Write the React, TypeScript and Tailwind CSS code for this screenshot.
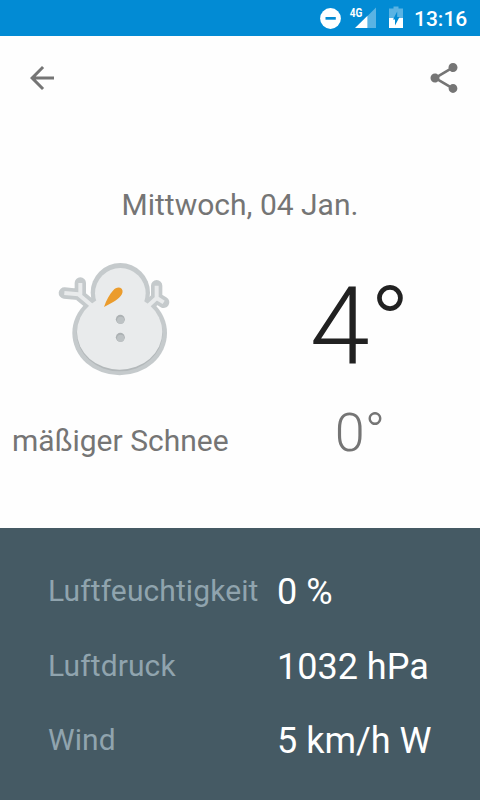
import { FC } from "react";

interface DetailProps {
  label: string;
  value: string;
}

const details: DetailProps[] = [
  { label: "Luftfeuchtigkeit", value: "0 %" },
  { label: "Luftdruck", value: "1032 hPa" },
  { label: "Wind", value: "5 km/h W" },
];

const StatusBar: FC = () => (
  <div className="flex h-9 items-center justify-end bg-[#028bd4] pr-3 text-white">
    <svg className="h-9 w-[21px]" viewBox="320 0 21 36">
      <circle cx="330.5" cy="18.5" r="10.4" fill="#fff" />
      <path d="M325.5 17h10.3v2.7h-10.3z" fill="#028bd4" />
    </svg>
    <svg className="ml-2 h-9 w-7" viewBox="349 0 28 36">
      <path d="M376 7.5V28h-8.500V16z" fill="#fff" fillOpacity=".35" />
      <path d="M367.5 15.8V28H355z" fill="#fff" />
      <text
        x="349.8"
        y="17"
        fill="#fff"
        fontFamily="Roboto, sans-serif"
        fontSize="13.5"
        fontWeight="700"
        textLength="12.6"
        lengthAdjust="spacingAndGlyphs"
      >
        4G
      </text>
    </svg>
    <svg className="ml-3 h-9 w-[14px]" viewBox="389 0 14 36">
      <path d="M389 8.5h4.5v-2h5v2h4.500V18H389z" fill="#fff" fillOpacity=".35" />
      <path d="M389 18h14v10h-14z" fill="#fff" />
      <path d="M397.200 11.500v5.500h2.300l-4.500 8.500v-6h-2z" fill="#028bd4" />
    </svg>
    <span className="ml-[11px] w-[54px] pt-[2px] text-[21px] leading-9 font-medium">
      13:16
    </span>
  </div>
);

const Toolbar: FC = () => (
  <div className="flex h-[84px] items-center justify-between pr-[18px] pl-6 text-[#757575]">
    <button aria-label="Zurück">
      <svg className="size-9" viewBox="0 0 24 24" fill="currentColor">
        <path d="M20 11H7.830l5.590-5.590L12 4l-8 8 8 8 1.410-1.410L7.830 13H20v-2z" />
      </svg>
    </button>
    <button aria-label="Teilen">
      <svg className="size-9" viewBox="0 0 24 24" fill="currentColor">
        <path d="M18 16.080c-.76 0-1.440.3-1.960.77L8.910 12.700c.05-.23.09-.46.09-.7s-.04-.47-.09-.7l7.050-4.110c.54.5 1.250.81 2.040.81 1.660 0 3-1.340 3-3s-1.340-3-3-3-3 1.340-3 3c0 .24.04.47.09.7L8.040 9.810C7.500 9.310 6.790 9 6 9c-1.660 0-3 1.340-3 3s1.340 3 3 3c.79 0 1.500-.31 2.040-.81l7.120 4.160c-.05.21-.08.43-.08.65 0 1.610 1.310 2.920 2.920 2.920s2.920-1.310 2.920-2.920-1.310-2.920-2.920-2.920z" />
      </svg>
    </button>
  </div>
);

const leftArm = "M43 114l42 4 41 34M91 84v35";
const rightArm = "M320 92v37l-26 24M320 129l21 13";

const Snowman: FC = () => (
  <svg className="size-[130px]" viewBox="0 0 390 390" fill="none">
    {/* grey sticker border */}
    <g fill="#c5cacc" stroke="#c5cacc">
      <circle cx="211" cy="113" r="89" stroke="none" />
      <ellipse cx="209" cy="234" rx="142" ry="127" stroke="none" />
      <g fill="none" strokeWidth="34" strokeLinecap="round" strokeLinejoin="round">
        <path d={leftArm} />
        <path d={rightArm} />
      </g>
    </g>
    <ellipse cx="209" cy="234" rx="129" ry="115" fill="#b3b8ba" />
    <circle cx="211" cy="115" r="76" fill="#e9ebec" />
    <ellipse cx="209" cy="231" rx="128" ry="113" fill="#e9ebec" />
    <g stroke="#e9ebec" strokeWidth="12" strokeLinejoin="round">
      <path d={leftArm} />
      <path d={rightArm} />
    </g>
    <path
      d="M162 156c7-20 17-38 28-50 7-9 18-11 25-5 5 6 3 15-3 22-12 14-31 23-50 33z"
      fill="#eb9c2d"
    />
    <g fill="#acb1b3">
      <circle cx="211" cy="193" r="13.500" />
      <circle cx="211" cy="247" r="13.500" />
    </g>
    <g fill="#bdc2c4">
      <circle cx="212" cy="196" r="11" />
      <circle cx="212" cy="250" r="11" />
    </g>
  </svg>
);

const Detail: FC<DetailProps> = ({ label, value }) => (
  <div className="flex h-[74.6px] items-center">
    <span className="w-[229px] text-[30px] tracking-[0.1px] text-[#90a4ae]">
      {label}
    </span>
    <span className="pt-[2.8px] text-[36px] text-white">{value}</span>
  </div>
);

const App: FC = () => {
  return (
    <div className="flex h-[800px] w-[480px] flex-col overflow-hidden bg-[#fefefe] font-['Roboto',sans-serif]">
      <StatusBar />
      <Toolbar />

      <div className="h-[408px] pt-[65px] text-[#757575]">
        <h1 className="text-center text-[30px] leading-10">Mittwoch, 04 Jan.</h1>

        <div className="flex pt-[30px]">
          <div className="flex w-60 flex-col items-start">
            <div className="pl-[50px]">
              <Snowman />
            </div>
            <p className="mt-9 pl-3 text-[30px] leading-10 whitespace-nowrap">
              mäßiger Schnee
            </p>
          </div>
          <div className="flex w-60 flex-col items-center font-light">
            <p className="pt-[7px] text-[108px] leading-[128px] text-[#212121]">4°</p>
            <p className="mt-[11px] text-[54px] leading-[64px]">0°</p>
          </div>
        </div>
      </div>

      <div className="flex-1 bg-[#455a64] pt-[25.3px] pl-12">
        {details.map((detail) => (
          <Detail key={detail.label} {...detail} />
        ))}
      </div>
    </div>
  );
};

export default App;
